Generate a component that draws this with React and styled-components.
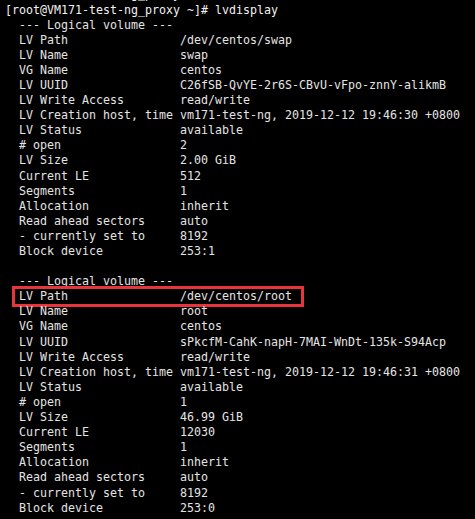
import React from 'react'
import styled, { createGlobalStyle } from 'styled-components'

const GlobalStyle = createGlobalStyle`
  html, body {
    margin: 0;
    padding: 0;
    background: #000;
  }
`

const Terminal = styled.div`
  width: 475px;
  height: 519px;
  overflow: hidden;
  background: #000;
  padding-left: 5px;
  box-sizing: border-box;
`

const Screen = styled.pre`
  margin: -12.6px 0 0;
  font-family: "DejaVu Sans Mono", "Liberation Mono", monospace;
  font-size: 11.63px;
  line-height: 15.1px;
  color: #e4e4e4;
  white-space: pre;
`

const Line = styled.div`
  position: relative;
  height: 15.1px;
  color: ${({ $bright }) => ($bright ? '#f2f2f2' : 'inherit')};
`

const Highlight = styled.span`
  position: absolute;
  left: 7px;
  top: -3.5px;
  width: 292px;
  height: 21px;
  border: 3px solid #e8353b;
  box-sizing: border-box;
  pointer-events: none;
`

const prompt = '[root@VM171-test-ng_proxy ~]# '

const volumes = [
  {
    path: '/dev/centos/swap',
    name: 'swap',
    uuid: 'C26fSB-QvYE-2r6S-CBvU-vFpo-znnY-alikmB',
    time: '2019-12-12 19:46:30 +0800',
    open: '2',
    size: '2.00 GiB',
    le: '512',
    block: '253:1',
  },
  {
    path: '/dev/centos/root',
    name: 'root',
    uuid: 'sPkcfM-CahK-napH-7MAI-WnDt-135k-S94Acp',
    time: '2019-12-12 19:46:31 +0800',
    open: '1',
    size: '46.99 GiB',
    le: '12030',
    block: '253:0',
    marked: true,
  },
]

const field = (label, value) => '  ' + label.padEnd(22, ' ') + ' ' + value

const App = () => {
  const lines = [{ text: prompt, bright: true }, { text: prompt + 'lvdisplay', bright: true }]

  volumes.forEach((v, i) => {
    if (i > 0) lines.push({ text: '' })
    lines.push({ text: '  --- Logical volume ---' })
    lines.push({ text: field('LV Path', v.path), marked: v.marked })
    lines.push({ text: field('LV Name', v.name) })
    lines.push({ text: field('VG Name', 'centos') })
    lines.push({ text: field('LV UUID', v.uuid) })
    lines.push({ text: field('LV Write Access', 'read/write') })
    lines.push({ text: field('LV Creation host, time', 'vm171-test-ng, ' + v.time) })
    lines.push({ text: field('LV Status', 'available') })
    lines.push({ text: field('# open', v.open) })
    lines.push({ text: field('LV Size', v.size) })
    lines.push({ text: field('Current LE', v.le) })
    lines.push({ text: field('Segments', '1') })
    lines.push({ text: field('Allocation', 'inherit') })
    lines.push({ text: field('Read ahead sectors', 'auto') })
    lines.push({ text: field('- currently set to', '8192') })
    lines.push({ text: field('Block device', v.block) })
  })

  return (
    <Terminal>
      <GlobalStyle />
      <Screen>
        {lines.map((l, i) => (
          <Line key={i} $bright={l.bright}>
            {l.text}
            {l.marked && <Highlight />}
          </Line>
        ))}
      </Screen>
    </Terminal>
  )
}

export default App
